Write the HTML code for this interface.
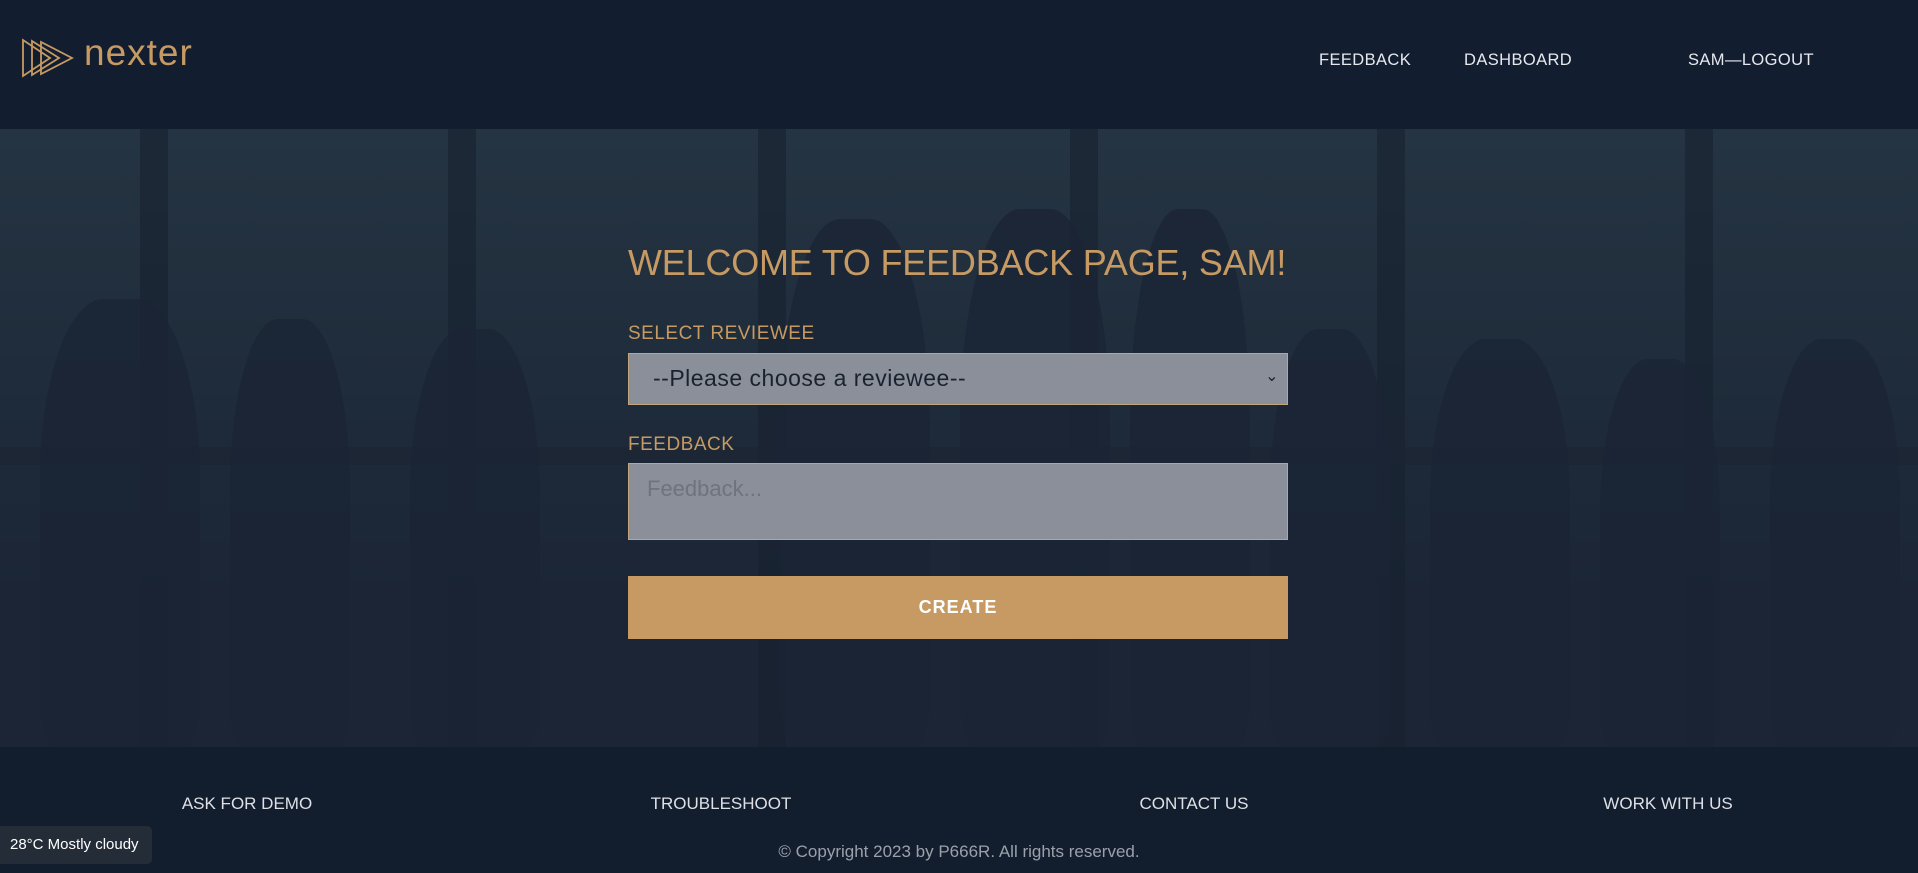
<!DOCTYPE html>
<html><head><meta charset="utf-8"><style>
*{margin:0;padding:0;box-sizing:border-box}
body{width:1918px;height:873px;overflow:hidden;background:#121d2e;font-family:"Liberation Sans",sans-serif;position:relative}
.hdr{position:absolute;left:0;top:0;width:1918px;height:129px;background:#121d2f}
.logo{position:absolute;left:22px;top:38px}
.brand{position:absolute;left:84px;top:32px;font-size:37px;color:#c69a62;letter-spacing:1px}
.nav{position:absolute;top:51px;font-size:16.5px;color:#e6e8ee;letter-spacing:.4px}
.hero{position:absolute;left:0;top:129px;width:1918px;height:618px;background:linear-gradient(180deg,#253442 0%,#1f2c3b 40%,#1b2536 75%,#1c2536 100%);overflow:hidden}
.bar{position:absolute;top:0;width:28px;height:618px;background:#17212f;opacity:.6}
.hbar{position:absolute;left:0;width:1918px;height:18px;background:#1a2432;opacity:.5}
.sil{position:absolute;background:#1a2434;border-radius:40% 40% 10% 10%;opacity:.8}
h1{position:absolute;left:628px;top:242px;font-size:36px;font-weight:normal;color:#c69a62;white-space:nowrap;letter-spacing:-.2px}
.lbl{position:absolute;left:628px;font-size:19px;color:#c69a62;letter-spacing:.5px}
.sel{position:absolute;left:628px;top:353px;width:660px;height:52px;background:#8a8f99;border:1px solid #c3a57c;font-size:23px;color:#1a2230;padding:11px 0 0 24px;letter-spacing:.5px}
.ta{position:absolute;left:628px;top:463px;width:660px;height:77px;background:#8a8f99;border:1px solid #c3a57c;font-size:22px;color:#6e737c;padding:12px 0 0 18px}
.btn{position:absolute;left:628px;top:576px;width:660px;height:63px;background:#c69a62;color:#fff;font-size:18px;font-weight:bold;text-align:center;line-height:63px;letter-spacing:1px}
.fl{position:absolute;top:794px;font-size:17px;color:#dde0e6;transform:translateX(-50%);white-space:nowrap}
.copy{position:absolute;top:842px;left:959px;transform:translateX(-50%);font-size:17px;color:#9ba1ab;white-space:nowrap}
.wx{position:absolute;left:0;top:826px;width:152px;height:38px;background:#242c38;border-radius:0 5px 5px 0;color:#fff;font-size:15px;line-height:38px;padding-left:10px}
</style></head><body>
<div class="hdr">
<svg class="logo" width="52" height="40" viewBox="0 0 52 40" fill="none" stroke="#c69a62" stroke-width="1.8"><path d="M1 2 L1 38 L28 20 Z"/><path d="M10 3 L10 37 L37 20 Z"/><path d="M19 4 L19 36 L50 20 Z"/></svg>
<div class="brand">nexter</div>
<div class="nav" style="left:1319px">FEEDBACK</div>
<div class="nav" style="left:1464px">DASHBOARD</div>
<div class="nav" style="left:1688px">SAM—LOGOUT</div>
</div>
<div class="hero">
<div class="bar" style="left:140px"></div><div class="bar" style="left:448px"></div><div class="bar" style="left:758px"></div><div class="bar" style="left:1070px"></div><div class="bar" style="left:1377px"></div><div class="bar" style="left:1685px"></div>
<div class="hbar" style="top:318px"></div>
<div class="sil" style="left:40px;top:170px;width:160px;height:448px"></div>
<div class="sil" style="left:230px;top:190px;width:120px;height:428px"></div>
<div class="sil" style="left:410px;top:200px;width:130px;height:418px"></div>
<div class="sil" style="left:780px;top:90px;width:150px;height:528px"></div>
<div class="sil" style="left:960px;top:80px;width:150px;height:538px"></div>
<div class="sil" style="left:1130px;top:80px;width:120px;height:538px"></div>
<div class="sil" style="left:1270px;top:200px;width:120px;height:418px"></div>
<div class="sil" style="left:1430px;top:210px;width:140px;height:408px"></div>
<div class="sil" style="left:1600px;top:230px;width:120px;height:388px"></div>
<div class="sil" style="left:1770px;top:210px;width:130px;height:408px"></div>
</div>
<h1>WELCOME TO FEEDBACK PAGE, SAM!</h1>
<div class="lbl" style="top:323px">SELECT REVIEWEE</div>
<div class="sel">--Please choose a reviewee--<span style="position:absolute;right:8px;top:12px;font-size:16px">⌄</span></div>
<div class="lbl" style="top:434px">FEEDBACK</div>
<div class="ta">Feedback...</div>
<div class="btn">CREATE</div>
<div class="fl" style="left:247px">ASK FOR DEMO</div>
<div class="fl" style="left:721px">TROUBLESHOOT</div>
<div class="fl" style="left:1194px">CONTACT US</div>
<div class="fl" style="left:1668px">WORK WITH US</div>
<div class="copy">© Copyright 2023 by P666R. All rights reserved.</div>
<div class="wx">28°C Mostly cloudy</div>
</body></html>
